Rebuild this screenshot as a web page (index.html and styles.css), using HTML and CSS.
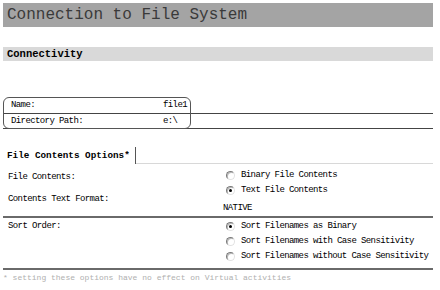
FILE: index.html
```html
<!DOCTYPE html>
<html lang="en">
<head>
  <meta charset="UTF-8">
  <title>Connection to File System</title>
  <link rel="stylesheet" href="styles.css">
</head>
<body>
  <div class="page">
    <h1 class="title">Connection to File System</h1>
    <h2 class="section">Connectivity</h2>

    <div class="props">
      <div class="prop">
        <span class="prop-label">Name:</span>
        <span class="prop-value">file1</span>
      </div>
      <div class="prop">
        <span class="prop-label">Directory Path:</span>
        <span class="prop-value">e:\</span>
      </div>
    </div>

    <div class="tabs">
      <div class="tab">File Contents Options*</div>
      <div class="tab-fill"></div>
    </div>

    <div class="opts opts-contents">
      <div class="opts-labels">
        <div class="line">File Contents:</div>
        <div class="line gap">Contents Text Format:</div>
      </div>
      <div class="opts-values">
        <div class="line"><span class="radio"></span>Binary File Contents</div>
        <div class="line"><span class="radio checked"></span>Text File Contents</div>
        <div class="line native">NATIVE</div>
      </div>
    </div>

    <div class="opts opts-sort">
      <div class="opts-labels">
        <div class="line">Sort Order:</div>
      </div>
      <div class="opts-values">
        <div class="line"><span class="radio checked"></span>Sort Filenames as Binary</div>
        <div class="line"><span class="radio"></span>Sort Filenames with Case Sensitivity</div>
        <div class="line"><span class="radio"></span>Sort Filenames without Case Sensitivity</div>
      </div>
    </div>

    <div class="note">* setting these options have no effect on Virtual activities</div>
  </div>
</body>
</html>
```

FILE: styles.css
```css
body {
  margin: 0;
  background: #fff;
  font-family: "Liberation Mono", "DejaVu Sans Mono", monospace;
  color: #000;
}
.page {
  width: 430px;
  margin: 3px;
  font-size: 9px;
  letter-spacing: -0.6px;
}
.title {
  margin: 0 0 20px;
  height: 24px;
  line-height: 25px;
  padding-left: 4px;
  background: #a4a4a4;
  font-size: 16px;
  font-weight: normal;
  letter-spacing: 0;
  color: #3a3a3a;
}
.section {
  margin: 0 0 36px;
  height: 14px;
  line-height: 14px;
  padding-left: 4px;
  background: #d9d9d9;
  font-size: 10.5px;
  font-weight: bold;
  letter-spacing: 0;
  color: #000;
}
.props {
  position: relative;
}
.props::before {
  content: "";
  position: absolute;
  top: 0;
  left: 0;
  width: 186px;
  bottom: 0;
  border: 1px solid #555;
  border-radius: 6px;
}
.prop {
  display: grid;
  grid-template-columns: 152px 1fr;
  padding-left: 8px;
  border-bottom: 1px solid #444;
}
.prop:first-child {
  height: 16px;
  line-height: 17px;
}
.prop:last-child {
  height: 14px;
  line-height: 14px;
}
.tabs {
  display: flex;
  align-items: flex-end;
  height: 19px;
  margin-top: 16px;
}
.tab {
  height: 17px;
  line-height: 17px;
  padding: 0 5px 0 4px;
  border-right: 1px solid #555;
  font-size: 9.3px;
  font-weight: bold;
  letter-spacing: 0;
  color: #000;
}
.tab-fill {
  flex: 1;
  align-self: stretch;
  border-bottom: 1px solid #d8d8d8;
}
.opts {
  display: grid;
  grid-template-columns: 220px 1fr;
}
.opts-labels {
  padding-left: 5px;
}
.line {
  height: 15px;
  line-height: 15px;
  display: flex;
  align-items: center;
  white-space: nowrap;
}
.opts-contents .opts-labels {
  padding-top: 6px;
}
.opts-contents .opts-values {
  padding-top: 4px;
}
.opts-labels .gap {
  margin-top: 7px;
}
.native {
  margin-top: 3px;
}
.opts-sort {
  border-top: 2px solid #6a6a6a;
  border-bottom: 2px solid #6a6a6a;
  padding: 1px 0 4px;
}
.radio {
  position: relative;
  box-sizing: border-box;
  width: 9px;
  height: 9px;
  margin: 0 6px 0 3px;
  border-radius: 50%;
  border: 1px solid;
  border-color: #7a7a7a #e2e2e2 #e2e2e2 #7a7a7a;
  box-shadow: inset 1px 1px 0 #b8b8b8;
  background: #fff;
}
.radio.checked::after {
  content: "";
  position: absolute;
  left: 2px;
  top: 2px;
  width: 3px;
  height: 3px;
  border-radius: 50%;
  background: #000;
}
.note {
  height: 14px;
  line-height: 15px;
  font-size: 8px;
  letter-spacing: 0;
  color: #b0b0b0;
}
```
